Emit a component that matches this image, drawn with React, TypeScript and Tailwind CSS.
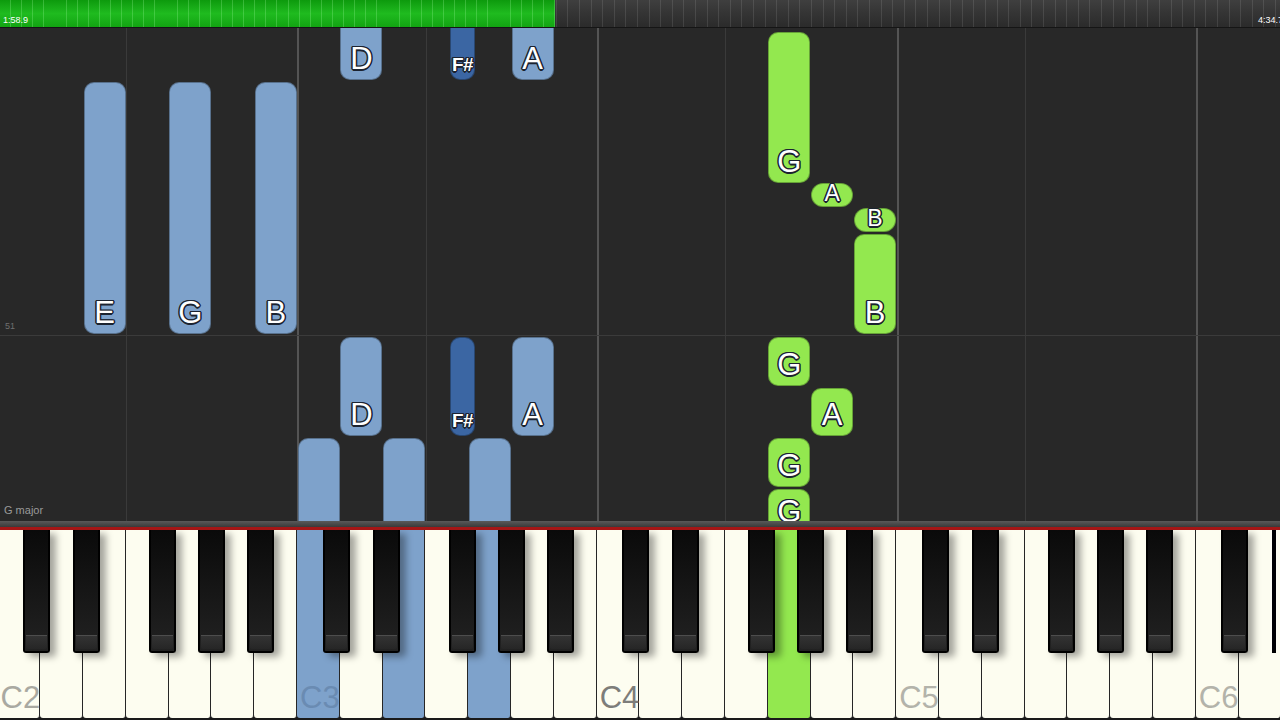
import React from 'react';

const KW = 42.8;
const X0 = -2.5;
const keyLeft = (i: number) => X0 + i * KW;

const BLUE = 'bg-[#7ea2cb]';
const DARK_BLUE = 'bg-[#3b66a3]';
const GREEN = 'bg-[#93e84f]';

type Note = {
  white?: number;
  x?: number;
  w?: number;
  top: number;
  bottom: number;
  color: string;
  label?: string;
  small?: boolean;
};

// page y coordinates, roll starts at y=28
const notes: Note[] = [
  { white: 8, top: 10, bottom: 80, color: BLUE, label: 'D' },
  { x: 450, w: 25, top: 10, bottom: 80, color: DARK_BLUE, label: 'F#' },
  { white: 12, top: 10, bottom: 80, color: BLUE, label: 'A' },
  { white: 2, top: 82, bottom: 334, color: BLUE, label: 'E' },
  { white: 4, top: 82, bottom: 334, color: BLUE, label: 'G' },
  { white: 6, top: 82, bottom: 334, color: BLUE, label: 'B' },
  { white: 8, top: 337, bottom: 436, color: BLUE, label: 'D' },
  { x: 450, w: 25, top: 337, bottom: 436, color: DARK_BLUE, label: 'F#' },
  { white: 12, top: 337, bottom: 436, color: BLUE, label: 'A' },
  { white: 7, top: 438, bottom: 580, color: BLUE },
  { white: 9, top: 438, bottom: 580, color: BLUE },
  { white: 11, top: 438, bottom: 580, color: BLUE },
  { white: 18, top: 32, bottom: 183, color: GREEN, label: 'G' },
  { white: 19, top: 183, bottom: 207, color: GREEN, label: 'A', small: true },
  { white: 20, top: 208, bottom: 232, color: GREEN, label: 'B', small: true },
  { white: 20, top: 234, bottom: 334, color: GREEN, label: 'B' },
  { white: 18, top: 337, bottom: 386, color: GREEN, label: 'G' },
  { white: 19, top: 388, bottom: 436, color: GREEN, label: 'A' },
  { white: 18, top: 438, bottom: 487, color: GREEN, label: 'G' },
  { white: 18, top: 489, bottom: 533, color: GREEN, label: 'G' },
];

const OUTLINE =
  '[text-shadow:-1.5px_0_#1b2330,1.5px_0_#1b2330,0_-1.5px_#1b2330,0_1.5px_#1b2330,-1px_-1px_#1b2330,1px_1px_#1b2330,-1px_1px_#1b2330,1px_-1px_#1b2330]';

const blackOffsets = [25.5, 75.5, 151.5, 200.5, 249.5];
const OCT = KW * 7;

const pressed: Record<number, string> = { 7: 'bg-[#7ea2cb]', 9: 'bg-[#7ea2cb]', 11: 'bg-[#7ea2cb]', 18: 'bg-[#93e84f]' };
const cLabels: Record<number, { t: string; c: string }> = {
  0: { t: 'C2', c: 'text-[#a9a9a1]' },
  7: { t: 'C3', c: 'text-[#6a8bb2]' },
  14: { t: 'C4', c: 'text-[#7d7d7a]' },
  21: { t: 'C5', c: 'text-[#b3b3aa]' },
  28: { t: 'C6', c: 'text-[#b3b3aa]' },
};

function TopBar() {
  return (
    <div className="relative h-[28px] shrink-0 overflow-hidden border-b border-[#151515] bg-gradient-to-b from-[#3f3f3f] via-[#343434] to-[#2b2b2b]">
      <div className="absolute inset-0 bg-[repeating-linear-gradient(90deg,transparent_0px,transparent_10.6px,rgba(255,255,255,0.1)_10.6px,rgba(255,255,255,0.1)_11.6px)]" />
      {/* progress */}
      <div className="absolute left-0 top-0 h-full w-[555px] bg-gradient-to-b from-[#0d9a0d] via-[#1fbb1f] to-[#12a412]">
        <div className="h-full w-full bg-[repeating-linear-gradient(90deg,transparent_0px,transparent_10.1px,rgba(170,255,170,0.25)_10.1px,rgba(170,255,170,0.25)_11.1px)]" />
      </div>
      <div className="relative flex h-full items-end justify-between pb-[2px] pl-[3px] pr-0 text-[9px] leading-none text-white font-['Liberation_Sans',sans-serif]">
        <span>1:58.9</span>
        <span className="mr-[-3px]">4:34.7</span>
      </div>
    </div>
  );
}

function NoteBlock({ n }: { n: Note }) {
  const left = n.white !== undefined ? keyLeft(n.white) + 0.5 : n.x!;
  const width = n.white !== undefined ? 42 : n.w!;
  const isSharp = n.label === 'F#';
  return (
    <div
      className={`absolute flex flex-col items-center justify-end ${n.color} border border-black/30 ${
        n.small ? 'rounded-[12px] pb-[1px]' : isSharp ? 'rounded-[10px] pb-[5px]' : 'rounded-[10px] pb-[5px]'
      }`}
      style={{ left, width, top: n.top - 28, height: n.bottom - n.top }}
    >
      {n.label && (
        <span
          className={`leading-none text-white font-['Liberation_Sans',sans-serif] ${OUTLINE} ${
            isSharp ? 'text-[19px] font-bold tracking-[-0.5px]' : n.small ? 'text-[23px]' : 'text-[31px]'
          }`}
        >
          {n.label}
        </span>
      )}
    </div>
  );
}

function Roll() {
  const cLines = [297, 597, 897, 1196];
  const fLines = [126, 426, 725, 1025];
  return (
    <div className="relative flex-1 overflow-hidden bg-[#282828]">
      {fLines.map((x) => (
        <div key={'f' + x} className="absolute top-0 bottom-0 w-px bg-[#3a3a3a]" style={{ left: x }} />
      ))}
      {cLines.map((x) => (
        <div key={'c' + x} className="absolute top-0 bottom-0 w-[1.5px] bg-[#545454]" style={{ left: x }} />
      ))}
      <div className="absolute left-0 right-0 top-[307px] h-px bg-[#3b3b3b]" />
      <span className="absolute left-[5px] top-[294px] text-[9px] leading-none text-[#6f6f6f] font-['Liberation_Sans',sans-serif]">51</span>
      <span className="absolute left-[4px] bottom-[5px] text-[11px] leading-none text-[#9a9a9a] font-['Liberation_Sans',sans-serif]">G major</span>
      {notes.map((n, i) => (
        <NoteBlock key={i} n={n} />
      ))}
    </div>
  );
}

function Keyboard() {
  const blacks: number[] = [];
  for (let o = 0; o < 4; o++) blacks.push(...blackOffsets.map((b) => keyLeft(0) + o * OCT + b));
  blacks.push(keyLeft(28) + blackOffsets[0]);
  return (
    <div className="flex h-[199px] shrink-0 flex-col bg-[#1a1a1a]">
      <div className="h-[6px] bg-gradient-to-b from-[#5a5a5a] to-[#3a3a3a]" />
      <div className="h-[3px] bg-[#a51616]" />
      <div className="relative h-[188px] overflow-hidden">
        <div className="ml-[-2.5px] flex h-full">
          {Array.from({ length: 30 }).map((_, i) => (
            <div
              key={i}
              className={`flex h-full w-[42.8px] shrink-0 items-end rounded-b-[3px] border-r-[1.5px] border-[#262626] pb-[5px] pl-[3px] ${pressed[i] ?? 'bg-[#fdfdf0]'}`}
            >
              {cLabels[i] && (
                <span className={`text-[31px] leading-none font-['Liberation_Sans',sans-serif] ${cLabels[i].c}`}>{cLabels[i].t}</span>
              )}
            </div>
          ))}
        </div>
        {blacks.map((x, i) => (
          <div
            key={i}
            className="absolute top-0 flex h-[123px] w-[27px] flex-col justify-end rounded-b-[3px] border-x-2 border-b-2 border-black bg-gradient-to-b from-[#0a0a0a] via-[#161616] to-[#222222] px-[1px] pb-[2px] shadow-[6px_4px_7px_rgba(0,0,0,0.35)]"
            style={{ left: x }}
          >
            <div className="h-[14px] rounded-b-[2px] border-t border-[#4d4d4d] bg-gradient-to-b from-[#333333] to-[#262626]" />
          </div>
        ))}
        <div className="absolute left-[1272px] top-0 h-[123px] w-[4px] bg-black" />
      </div>
    </div>
  );
}

export default function App() {
  return (
    <div className="flex h-[720px] w-[1280px] flex-col overflow-hidden bg-[#282828]">
      <TopBar />
      <Roll />
      <Keyboard />
    </div>
  );
}
